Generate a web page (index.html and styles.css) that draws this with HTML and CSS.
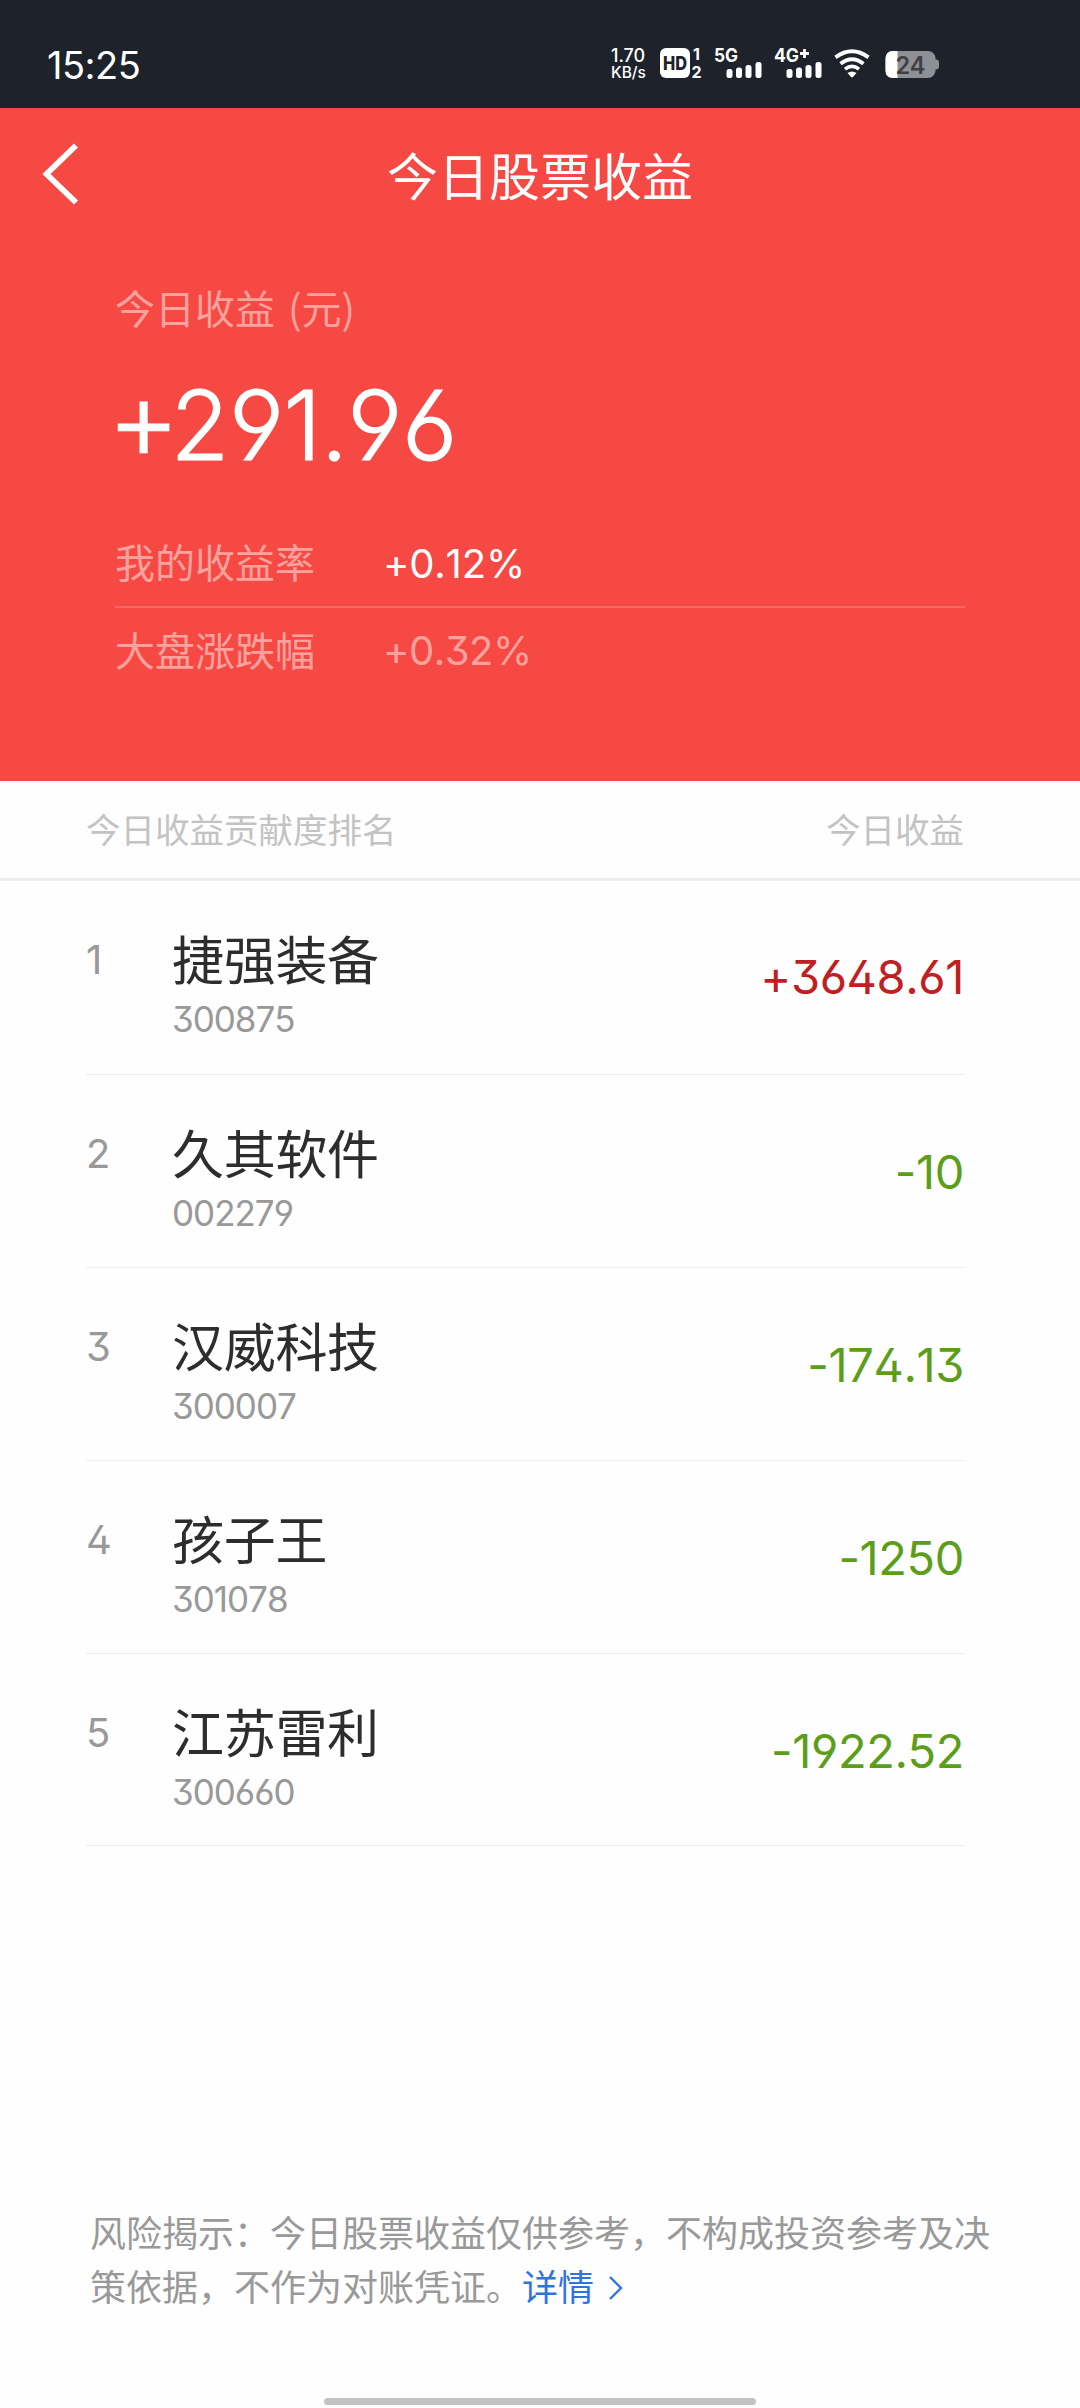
FILE: index.html
```html
<!DOCTYPE html>
<html lang="zh-CN">
<head>
<meta charset="utf-8">
<title>今日股票收益</title>
<link rel="stylesheet" href="styles.css">
</head>
<body>
<div class="screen">
  <header class="status">
    <span class="clock">15:25</span>
    <div class="status-icons">
      <div class="speed"><span class="speed-num">1.70</span><span class="speed-unit">KB/s</span></div>
      <svg class="hd" width="44" height="32" viewBox="0 0 44 32">
        <rect x="0" y="1" width="30" height="30" rx="6" fill="#fff"/>
        <text x="3" y="22.5" textLength="24" lengthAdjust="spacingAndGlyphs" class="t-hd">HD</text>
        <text x="33" y="12.8" class="t-sim">1</text>
        <text x="31.5" y="31" class="t-sim">2</text>
      </svg>
      <svg class="sig5" width="50" height="32" viewBox="0 0 50 32">
        <text x="0" y="15.4" textLength="24" lengthAdjust="spacingAndGlyphs" class="t-net">5G</text>
        <g fill="#fff"><rect x="12.5" y="22" width="6" height="9" rx="2.5"/><rect x="22" y="20.5" width="6" height="10.5" rx="2.5"/><rect x="31.5" y="18" width="6" height="13" rx="2.5"/><rect x="41.5" y="15" width="6" height="16" rx="2.5"/></g>
      </svg>
      <svg class="sig4" width="50" height="32" viewBox="0 0 50 32">
        <text x="0" y="15.4" textLength="25" lengthAdjust="spacingAndGlyphs" class="t-net">4G</text>
        <path d="M26 6.5h9M30.5 2v9" stroke="#fff" stroke-width="2.8"/>
        <g fill="#fff"><rect x="12.5" y="22" width="6" height="9" rx="2.5"/><rect x="22" y="20.5" width="6" height="10.5" rx="2.5"/><rect x="31.5" y="18" width="6" height="13" rx="2.5"/><rect x="41.5" y="15" width="6" height="16" rx="2.5"/></g>
      </svg>
      <svg class="wifi" width="36" height="32" viewBox="0 0 36 32">
        <g fill="none" stroke="#fff" stroke-width="4">
          <path d="M1.5 10.3Q18-1.7 34.5 10.3"/>
          <path d="M6.6 16.7Q18 7.7 29.4 16.7"/>
          <path d="M11 22.2Q18 16.6 25 22.2" stroke-width="3.6"/>
        </g>
        <path d="M13.5 26Q18 22.8 22.5 26L19.2 29.8Q18 31 16.8 29.8Z" fill="#fff"/>
      </svg>
      <svg class="battery" width="55" height="28" viewBox="0 0 55 28">
        <rect x="48" y="8.5" width="6" height="10" rx="3" fill="#8e9096"/>
        <rect x="0.5" y="0" width="50" height="27" rx="7.5" fill="#8e9096"/>
        <path d="M12.5 0H8Q.5 0 .5 7.5V19.5Q.5 27 8 27H12.5Z" fill="#fff"/>
        <text x="10.5" y="23" textLength="30" lengthAdjust="spacingAndGlyphs" class="t-bat">24</text>
      </svg>
    </div>
  </header>

  <section class="hero">
    <div class="navbar">
      <svg class="back" width="40" height="62" viewBox="0 0 40 62"><path d="M36 2.5L6.5 31L36 59.5" fill="none" stroke="#fff" stroke-width="5.8"/></svg>
      <h1 class="title">今日股票收益</h1>
    </div>
    <div class="summary">
      <div class="label total-label">今日收益 (元)</div>
      <div class="total num"><span class="plus">+</span><span>291.96</span></div>
      <div class="rate first"><span class="label">我的收益率</span><span class="num rate-val">+0.12%</span></div>
      <div class="rate"><span class="label">大盘涨跌幅</span><span class="num rate-val dim">+0.32%</span></div>
    </div>
  </section>

  <div class="list-head"><span>今日收益贡献度排名</span><span>今日收益</span></div>

  <ul class="list">
    <li class="row row-first"><span class="rank num">1</span><div class="stock"><div class="name">捷强装备</div><div class="code num">300875</div></div><span class="value num up">+3648.61</span></li>
    <li class="row"><span class="rank num">2</span><div class="stock"><div class="name">久其软件</div><div class="code num">002279</div></div><span class="value num">-10</span></li>
    <li class="row"><span class="rank num">3</span><div class="stock"><div class="name">汉威科技</div><div class="code num">300007</div></div><span class="value num">-174.13</span></li>
    <li class="row"><span class="rank num">4</span><div class="stock"><div class="name">孩子王</div><div class="code num">301078</div></div><span class="value num">-1250</span></li>
    <li class="row row-last"><span class="rank num">5</span><div class="stock"><div class="name">江苏雷利</div><div class="code num">300660</div></div><span class="value num">-1922.52</span></li>
  </ul>

  <footer class="footer">
    <p class="notice">风险揭示：今日股票收益仅供参考，不构成投资参考及决策依据，不作为对账凭证。<a class="more">详情<svg class="chev" width="16" height="26" viewBox="0 0 16 26"><path d="M2 2L13 13L2 24" fill="none" stroke="#2f74dc" stroke-width="2.4"/></svg></a></p>
    <div class="home-bar"></div>
  </footer>
</div>
</body>
</html>
```
FILE: styles.css
```css
* { box-sizing: border-box; margin: 0; padding: 0; }

body {
  width: 1080px;
  background: #fefefe;
  font-family: "Noto Sans CJK SC", sans-serif;
  color: #2d2d2d;
}

.screen {
  width: 1080px;
  height: 2408px;
  display: flex;
  flex-direction: column;
}

.num {
  font-family: Inter, sans-serif;
  font-feature-settings: "ss01" 1;
  font-kerning: none;
}

/* Status bar */
.status {
  height: 108px;
  padding: 23px 0 0 47px;
  background: #1e222b;
  color: #fff;
  display: flex;
}

.clock {
  width: 564px;
  font: 400 38px/84px Inter, sans-serif;
  letter-spacing: -0.5px;
}

.status-icons { display: flex; padding-top: 24px; }
.status-icons svg { overflow: visible; }
.speed {
  width: 49px;
  display: flex;
  flex-direction: column;
  font-family: Inter, sans-serif;
  font-weight: 500;
  white-space: nowrap;
}
.speed-num { font-size: 18px; line-height: 17px; }
.speed-unit { font-size: 15.5px; line-height: 17px; }
.hd { margin-right: 10px; }
.sig5 { margin-right: 10px; }
.sig4 { margin-right: 10px; }
.wifi { margin-right: 15px; }
.battery { margin-top: 4px; }
.t-hd { font: 800 18.5px Inter, sans-serif; fill: #1e222b; }
.t-sim { font: 700 16px Inter, sans-serif; fill: #fff; }
.t-net { font: 700 18.5px Inter, sans-serif; fill: #fff; }
.t-bat { font: 600 24px Inter, sans-serif; fill: #3f4044; }

/* Red summary block */
.hero {
  height: 673px;
  background: #f64943;
  color: #fff;
}

.navbar {
  height: 132px;
  display: grid;
  grid-template-columns: 80px 1fr 80px;
  align-items: center;
}

.back { margin-left: 40px; }
.title { font-size: 51px; font-weight: 400; line-height: 64px; text-align: center; }

.summary { padding: 32px 115px 0; }
.label { font-size: 40px; line-height: 70px; color: #ffa29e; }
.rate .label { margin-top: -4px; }
.total-label { word-spacing: 4px; }
.total {
  display: flex;
  align-items: center;
  height: 110px;
  margin-top: 28px;
  font-size: 96px;
  font-weight: 300;
  line-height: 110px;
  letter-spacing: -0.6px;
  -webkit-text-stroke: 1px #fff;
}
.plus { font-size: 112px; margin: 0 -9px 0 -8px; padding-bottom: 14px; }
.rate { display: flex; align-items: center; height: 85px; }
.rate.first { height: 88px; margin-top: 40px; border-bottom: 2px solid #f86762; }
.rate-val { font-size: 40px; margin-left: 68px; letter-spacing: -0.2px; }
.dim { color: #ffa29e; letter-spacing: -0.5px; }

/* Ranking list */
.list-head {
  height: 100px;
  padding: 0 116px 4px 86px;
  border-bottom: 3px solid #eee;
  display: flex;
  justify-content: space-between;
  align-items: center;
  font-size: 34.5px;
  color: #c3c3c3;
}

.list { list-style: none; padding: 0 115px 0 86px; }
.row {
  height: 193px;
  border-bottom: 1px solid #ececec;
  display: flex;
}
.row-first { height: 194px; }
.row-last { height: 192px; }
.rank { width: 86px; padding-top: 49px; font-size: 40px; line-height: 60px; color: #999; }
.stock { flex: 1; padding-top: 45px; }
.name { font-size: 52px; line-height: 64px; letter-spacing: -0.3px; }
.code { font-size: 35px; line-height: 40px; margin-top: 9px; letter-spacing: -1px; color: #999; }
.value { padding: 67px 1px 0 0; font-size: 47px; line-height: 60px; letter-spacing: -0.4px; color: #5c9e19; }
.value.up { padding-top: 66px; color: #c02022; }

/* Footer */
.footer {
  flex: 1;
  display: flex;
  flex-direction: column;
  justify-content: space-between;
  align-items: center;
  padding: 358px 0 3px;
}
.notice {
  width: 900px;
  font-size: 36px;
  line-height: 54px;
  color: #999;
}
.more { color: #2f74dc; }
.chev { margin-left: 14px; }
.home-bar { width: 432px; height: 7px; border-radius: 4px; background: #c2c2c2; }
```
